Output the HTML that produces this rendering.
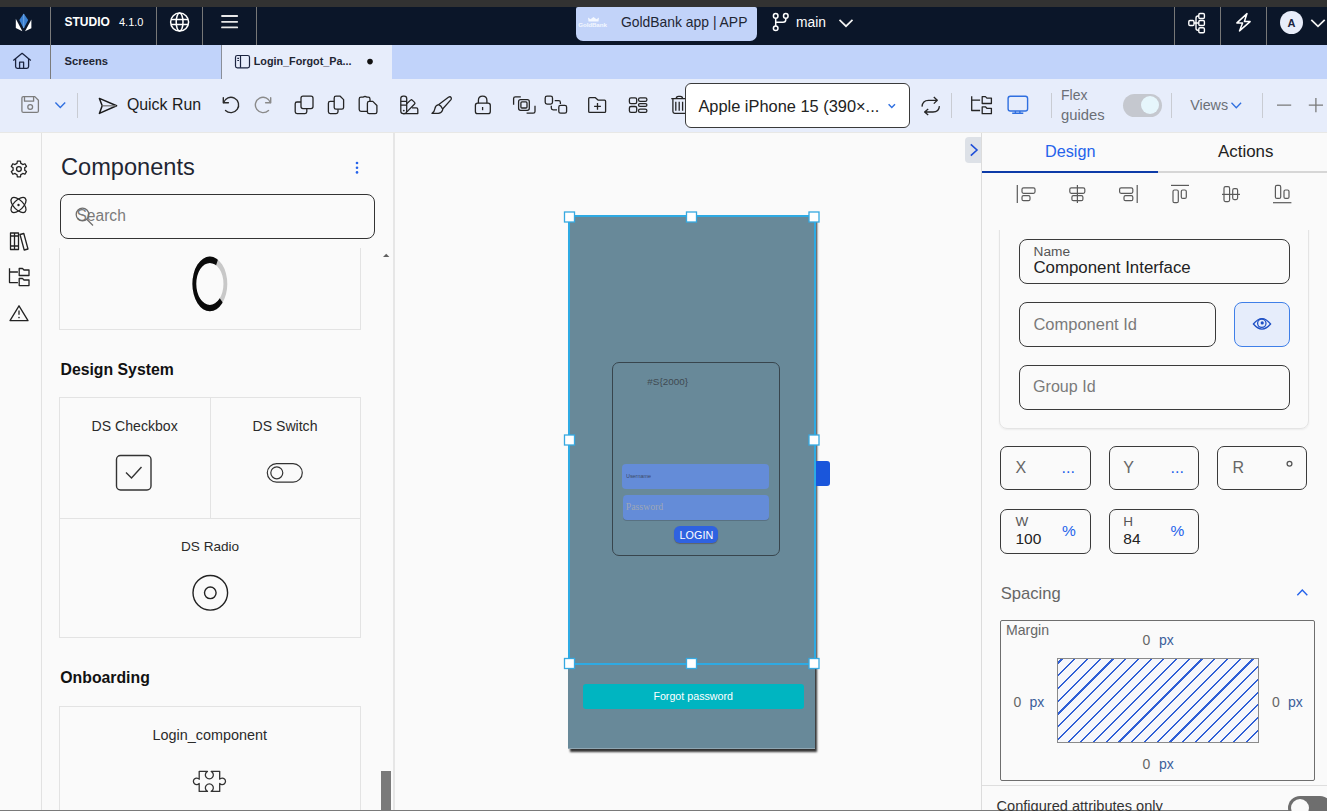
<!DOCTYPE html>
<html><head><meta charset="utf-8">
<style>
*{box-sizing:border-box;margin:0;padding:0}
html,body{width:1327px;height:811px;overflow:hidden;background:#fafafa;font-family:"Liberation Sans",sans-serif}
.a{position:absolute}
.t{position:absolute;white-space:nowrap;line-height:1;font-family:"Liberation Sans",sans-serif}
svg{position:absolute;overflow:visible}
.vl{position:absolute;width:1px}
.box{position:absolute;border:1px solid #3a3a3a;border-radius:8px;background:#fafafa}
</style></head><body>
<!-- top strip -->
<div class="a" style="left:0;top:0;width:1327px;height:7px;background:#323232"></div>
<!-- navy bar -->
<div class="a" style="left:0;top:7px;width:1327px;height:38px;background:#0b1629"></div>
<!-- tab row -->
<div class="a" style="left:0;top:45px;width:1327px;height:34px;background:#c1d3fa"></div>
<!-- active tab -->
<div class="a" style="left:221px;top:45px;width:171px;height:34px;background:#e7edfb;border-left:1px solid #8a8f99"></div>
<!-- toolbar -->
<div class="a" style="left:0;top:79px;width:1327px;height:53px;background:#e7edfb"></div>
<div class="a" style="left:0;top:132px;width:1327px;height:1px;background:#e8e8e6"></div>
<!-- left sidebar border -->
<div class="a" style="left:41px;top:133px;width:1px;height:678px;background:#e2e2e2"></div>
<!-- components panel border -->
<div class="a" style="left:393px;top:133px;width:2px;height:678px;background:#e6e6e6"></div>
<!-- canvas -->
<div class="a" style="left:395px;top:133px;width:586px;height:678px;background:#fafafa"></div>
<!-- right panel border -->
<div class="a" style="left:981px;top:133px;width:1px;height:678px;background:#dcdcdc"></div>
<!-- bottom line -->
<div class="a" style="left:0;top:810px;width:1327px;height:1px;background:#7a7a7a"></div>

<!-- navy dividers -->
<div class="vl" style="left:50px;top:7px;height:72px;background:#7b7b7b"></div>
<div class="vl" style="left:156px;top:7px;height:38px;background:#777777"></div>
<div class="vl" style="left:202px;top:7px;height:38px;background:#777777"></div>
<div class="vl" style="left:256px;top:7px;height:38px;background:#777777"></div>
<div class="vl" style="left:1174px;top:7px;height:38px;background:#777777"></div>
<div class="vl" style="left:1220px;top:7px;height:38px;background:#777777"></div>
<div class="vl" style="left:1266px;top:7px;height:38px;background:#777777"></div>

<!-- texts top bar -->
<div class="t" style="left:64.5px;top:16.4px;font-size:12px;font-weight:700;color:#fff">STUDIO</div>
<div class="t" style="left:119px;top:16.6px;font-size:11px;color:#fff">4.1.0</div>
<!-- pill -->
<div class="a" style="left:576px;top:7px;width:181px;height:34px;background:#c2d3f9;border-radius:2px 2px 7px 7px"></div>
<div class="t" style="left:621px;top:16.2px;font-size:13.9px;color:#1f2633">GoldBank app | APP</div>
<div class="t" style="left:796px;top:16px;font-size:13.8px;color:#fff">main</div>

<div class="t" style="left:64.5px;top:55.5px;font-size:11.2px;font-weight:700;color:#1f2633">Screens</div>
<div class="t" style="left:253.7px;top:55.5px;font-size:10.8px;font-weight:700;color:#1f2633">Login_Forgot_Pa...</div>

<!-- toolbar texts -->
<div class="t" style="left:126.9px;top:96.5px;font-size:15.9px;color:#1c1c1c">Quick Run</div>
<div class="a" style="left:685px;top:83px;width:225px;height:44.5px;background:#fff;border:1px solid #3a3a3a;border-radius:6px"></div>
<div class="t" style="left:698.4px;top:97.9px;font-size:16.4px;color:#222">Apple iPhone 15 (390×...</div>
<div class="t" style="left:1061px;top:88.4px;font-size:14px;color:#6b6f76">Flex</div>
<div class="t" style="left:1061px;top:107.6px;font-size:14.8px;color:#6b6f76">guides</div>
<div class="t" style="left:1190.2px;top:98.1px;font-size:14.3px;color:#6b6f76">Views</div>

<!-- toolbar dividers -->
<div class="vl" style="left:77px;top:93px;height:25px;background:#c9ccd3"></div>
<div class="vl" style="left:951px;top:93px;height:25px;background:#c9ccd3"></div>
<div class="vl" style="left:1051px;top:93px;height:25px;background:#c9ccd3"></div>
<div class="vl" style="left:1171px;top:93px;height:25px;background:#c9ccd3"></div>
<div class="vl" style="left:1262px;top:93px;height:25px;background:#c9ccd3"></div>


<!-- TOPBAR ICONS -->
<svg style="left:0;top:0" width="1" height="1">
 <polygon points="23.7,13.6 28.2,20 23.7,28.6 19.3,20" fill="#3a7fd0"/>
 <path d="M23.7 14 V28" stroke="#7eb0e6" stroke-width="0.8"/>
 <polygon points="15.8,18.8 22.4,31.3 15.8,28" fill="#fff"/>
 <polygon points="31.4,19.6 25,31.3 31.4,28.2" fill="#fff"/>
 <g fill="none" stroke="#fff" stroke-width="1.5">
  <circle cx="179.6" cy="22.1" r="9"/>
  <ellipse cx="179.6" cy="22.1" rx="3.4" ry="9"/>
  <path d="M171 19.6 H188.2 M171 24.6 H188.2"/>
 </g>
 <g stroke="#e8e8e8" stroke-width="1.8" stroke-linecap="round"><path d="M222 16 H237.2 M222 21.8 H237.2 M222 27.4 H237.2"/></g>
 <!-- branch -->
 <g fill="none" stroke="#fff" stroke-width="1.5">
  <circle cx="775.7" cy="15.9" r="2.3"/><circle cx="785.8" cy="15.9" r="2.3"/><circle cx="775.7" cy="28.3" r="2.3"/>
  <path d="M775.7 18.2 V26 M785.8 18.2 V19.5 Q785.8 22.3 783 22.3 H775.7"/>
 </g>
 <path d="M839.5 19.8 L846 26.2 L852.5 19.8" fill="none" stroke="#f2f2f2" stroke-width="1.7"/>
 <!-- tree -->
 <g fill="none" stroke="#fff" stroke-width="1.4">
  <rect x="1188.8" y="20.5" width="5.2" height="5" rx="1.2"/>
  <rect x="1198.8" y="13.5" width="5.6" height="5" rx="1.2"/>
  <rect x="1198.8" y="20.5" width="5.6" height="5" rx="1.2"/>
  <rect x="1198.8" y="27.8" width="5.6" height="5" rx="1.2"/>
  <path d="M1198.8 16 H1198 Q1196 16 1196 18 V28.3 Q1196 30.3 1198 30.3 H1198.8 M1194 23 H1198.8"/>
 </g>
 <path d="M1247 13.6 L1236.9 22.9 H1242.6 L1239.5 30.9 L1250.1 21.6 H1244.4 Z" fill="none" stroke="#fff" stroke-width="1.5" stroke-linejoin="round"/>
 <circle cx="1291.5" cy="22.5" r="11.5" fill="#e8edfa"/>
 <path d="M1311.3 19.8 L1318 26.4 L1324.7 19.8" fill="none" stroke="#f2f2f2" stroke-width="1.7"/>
 <!-- home -->
 <g fill="none" stroke="#1b2440" stroke-width="1.3" stroke-linejoin="round">
  <path d="M13.3 60.6 L22.1 53.3 L30.8 60.6"/>
  <path d="M15.6 58.8 V66.6 Q15.6 68.3 17.3 68.3 H26.9 Q28.6 68.3 28.6 66.6 V58.8"/>
  <path d="M19.6 68.3 V62.2 H23.6 V68.3"/>
 </g>
 <!-- page icon in tab -->
 <g fill="none" stroke="#1b2440" stroke-width="1.2">
  <rect x="235.5" y="55.5" width="14" height="12.3" rx="1.8"/>
  <path d="M240.5 55.5 V67.8 M237.3 58.3 H239 M237.3 60.5 H239"/>
 </g>
 <circle cx="370" cy="61.6" r="2.8" fill="#111"/>
</svg>
<div class="t" style="left:1287.5px;top:17.6px;font-size:11px;font-weight:700;color:#1b2440">A</div>
<div class="t" style="left:578.3px;top:22.2px;font-size:6.2px;font-weight:700;color:#f4f8ff;letter-spacing:-0.1px">GoldBank</div>
<svg style="left:0;top:0" width="1" height="1"><path d="M588.5 21.6 L588 17.6 L590.5 19.3 L593.5 17 L596.5 19.3 L599 17.6 L598.5 21.6 Z" fill="#f4f8ff"/></svg>

<!-- TOOLBAR ICONS -->
<svg style="left:0;top:0" width="1" height="1">
 <g fill="none" stroke="#7d7d7d" stroke-width="1.3" stroke-linejoin="round">
  <path d="M23.4 96.6 H34.8 L38.4 100.2 V110.9 Q38.4 112.4 36.9 112.4 H23.4 Q21.9 112.4 21.9 110.9 V98.1 Q21.9 96.6 23.4 96.6 Z"/>
  <path d="M24.5 96.6 V101.2 H33.6 V96.6"/>
  <circle cx="30.2" cy="107" r="2.4"/>
 </g>
 <path d="M55.4 102.6 L60.3 107.6 L65.2 102.6" fill="none" stroke="#2f6fe0" stroke-width="1.4"/>
 <g fill="none" stroke="#1a1a1a" stroke-width="1.5" stroke-linejoin="round">
  <path d="M99.4 98.4 L116.6 105.8 L99.4 113.4 L102.2 105.8 Z"/>
 </g>
 <path d="M102.2 105.8 H116" stroke="#777" stroke-width="1.3"/>
 <!-- undo / redo -->
 <g fill="none" stroke-width="1.4" stroke-linecap="round" stroke-linejoin="round">
  <path d="M223.6 102.6 A7.7 7.7 0 1 1 225.5 110.4" stroke="#2a2a2a"/>
  <path d="M223.3 97.8 V102.8 H228.4" stroke="#2a2a2a"/>
  <path d="M270.4 102.6 A7.7 7.7 0 1 0 268.5 110.4" stroke="#8a8a8a"/>
  <path d="M270.7 97.8 V102.8 H265.6" stroke="#8a8a8a"/>
 </g>
 <g fill="none" stroke="#252525" stroke-width="1.3" stroke-linejoin="round">
  <!-- copy1 -->
  <path d="M301 102 H297 Q295.2 102 295.2 103.8 V111.8 Q295.2 113.6 297 113.6 H305 Q306.8 113.6 306.8 111.8 V108.6"/>
  <rect x="301" y="96.2" width="12" height="12.4" rx="2"/>
  <!-- copy2 -->
  <path d="M334.2 101.4 H330.2 Q328.4 101.4 328.4 103.2 V111.8 Q328.4 113.6 330.2 113.6 H336.2 Q338 113.6 338 111.8 V109.2"/>
  <path d="M336 96.2 H340.2 L343.6 99.6 V107.4 Q343.6 109.2 341.8 109.2 H336 Q334.2 109.2 334.2 107.4 V98 Q334.2 96.2 336 96.2 Z"/>
  <!-- paste -->
  <path d="M367.4 111.4 H361 Q359.2 111.4 359.2 109.6 V99 Q359.2 97.2 361 97.2 H363 L365 96.4 L367 97.2 H368.2 Q370 97.2 370 99 V101.3"/>
  <path d="M369.2 101.4 H372.8 L376.9 105.5 V111.9 Q376.9 113.7 375.1 113.7 H369.2 Q367.4 113.7 367.4 111.9 V103.2 Q367.4 101.4 369.2 101.4 Z"/>
  <!-- palette -->
  <rect x="400.8" y="96.2" width="5.9" height="17.4" rx="2.4"/>
  <path d="M400.8 101.4 H406.7 M400.8 105.2 H406.7"/>
  <path d="M406.7 103.8 L410.6 100.1 Q411.4 99.3 412.2 100.1 L414.6 102.4 Q415.4 103.2 414.6 104 L406.9 111.9"/>
  <path d="M412 107.9 H416.3 Q417.8 107.9 417.8 109.4 V113.6 H403"/>
  <!-- brush -->
  <path d="M438.8 104.6 L448.4 97.3 Q450.4 96 451.2 97.7 Q451.6 98.6 451 99.6 L442.6 109"/>
  <path d="M438.8 104.6 Q435.4 105.2 434.9 108.6 Q434.5 111.8 432 113.3 H438.2 Q441.4 113.3 442.4 110.6 Q442.8 109.6 442.6 109 Q441.2 105.8 438.8 104.6 Z"/>
  <!-- lock -->
  <path d="M478.4 103.2 V100.6 Q478.4 96.2 482.6 96.2 Q486.9 96.2 486.9 100.6 V103.2"/>
  <rect x="475.4" y="103.2" width="14.9" height="10.5" rx="2.2"/>
  <path d="M482.6 107 V110.2"/>
  <!-- group -->
  <path d="M513.6 104.7 V98.6 Q513.6 96.8 515.4 96.8 H520.8"/>
  <path d="M526.6 113.2 H533.2 Q535 113.2 535 111.4 V105.8"/>
  <rect x="518.6" y="99.6" width="10.7" height="10.7" rx="2"/>
  <rect x="520.9" y="101.9" width="6.1" height="6.1" rx="1"/>
  <!-- ungroup -->
  <rect x="545.2" y="96.2" width="7.3" height="7.9" rx="1.8"/>
  <rect x="558.8" y="105.3" width="7.8" height="7.9" rx="1.8"/>
  <path d="M554.7 100.7 H558.6 Q560.4 100.7 560.4 102.5 V104.1"/>
  <path d="M551.3 105.8 V108 Q551.3 109.8 553.1 109.8 H557"/>
  <!-- folder plus -->
  <path d="M588.7 98.7 Q588.7 97.7 589.7 97.7 H595.4 L598.3 100.2 H604.6 Q605.6 100.2 605.6 101.2 V111.4 Q605.6 112.4 604.6 112.4 H589.7 Q588.7 112.4 588.7 111.4 Z"/>
  <path d="M597.5 103 V109.8 M594.1 106.4 H600.9"/>
  <!-- grid -->
  <rect x="629.4" y="97.8" width="7.3" height="5.8" rx="1.6"/>
  <rect x="629.4" y="106.5" width="7.3" height="5.9" rx="1.6"/>
  <rect x="638.5" y="97.8" width="8.4" height="3.5" rx="1.6"/>
  <rect x="638.5" y="103.6" width="8.4" height="2.8" rx="1.4"/>
  <rect x="638.5" y="109.1" width="8.4" height="3.3" rx="1.6"/>
  <!-- trash -->
  <path d="M671.3 98.7 H685 M676.2 98.7 Q676.2 96.3 678.5 96.3 H680.3 Q682.6 96.3 682.6 98.7"/>
  <path d="M672.9 98.7 V111.6 Q672.9 113.4 674.7 113.4 H685"/>
  <path d="M675.8 101.8 V110.8 M679.2 101.8 V110.8 M682.6 101.8 V110.8"/>
  <!-- swap -->
  <path d="M922 106.6 Q922.5 100.3 928.5 100.3 H937.3 M933.8 97.1 L937.3 100.3 L933.8 103.6"/>
  <path d="M939.4 106.1 Q939 112 933 112 H924.6 M928.2 108.9 L924.6 112 L928.2 115"/>
  <!-- folder tree -->
  <path d="M971.7 96.3 V110.5 H980.1 M971.7 100.2 H980.1"/>
  <path d="M982.2 103.5 V96.6 h3.2 l1.5 1.5 h4.5 v5.4 z M982.2 113.7 V106.8 h3.2 l1.5 1.5 h4.5 v5.4 z"/>
 </g>
 <g fill="none" stroke="#2f6fe0" stroke-width="1.4">
  <rect x="1008.1" y="96.3" width="19.5" height="14.7" rx="2.2"/>
  <path d="M1015.4 111 V113.3 M1019.9 111 V113.3 M1012.2 113.3 H1023.3"/>
 </g>
 <path d="M888.6 104.2 L891.8 107.6 L895 104.2" fill="none" stroke="#2f6fe0" stroke-width="1.4"/>
 <path d="M1231.5 102.8 L1236.3 107.7 L1241.1 102.8" fill="none" stroke="#2f6fe0" stroke-width="1.3"/>
 <g stroke="#7a7a7a" stroke-width="1.3"><path d="M1277 105.1 H1291.2 M1308.8 105.1 H1323 M1315.9 98 V112.2"/></g>
</svg>
<div class="a" style="left:1123px;top:94px;width:39px;height:23px;background:#c5c8cf;border-radius:11.5px"></div>
<div class="a" style="left:1140.7px;top:95.7px;width:18.6px;height:18.6px;background:#e6f6fc;border-radius:50%"></div>

<!-- components panel -->
<div class="t" style="left:61px;top:156.4px;font-size:23.6px;color:#1f2633">Components</div>
<div class="box" style="left:60px;top:194px;width:315px;height:45px;border-color:#333"></div>
<div class="t" style="left:76.4px;top:208.3px;font-size:15.6px;color:#7a7a7a">Search</div>

<!-- search magnifier -->
<svg style="left:0;top:0" width="1" height="1"><g fill="none" stroke="#6d6d6d" stroke-width="1.3"><circle cx="82.5" cy="214.5" r="6.3"/><path d="M87 219.5 L93 225.5"/></g></svg>
<!-- kebab -->
<svg style="left:0;top:0" width="1" height="1"><g fill="#2563eb"><circle cx="357" cy="163" r="1.3"/><circle cx="357" cy="167.7" r="1.3"/><circle cx="357" cy="172.4" r="1.3"/></g></svg>

<!-- list clip area -->
<div class="a" style="left:42px;top:248px;width:351px;height:562px;overflow:hidden">
  <!-- card 1 -->
  <div class="a" style="left:17px;top:-20px;width:302px;height:102px;border:1px solid #e3e3e3"></div>
  <div class="t" style="left:18.5px;top:113.6px;font-size:15.8px;font-weight:700;color:#111">Design System</div>
  <!-- DS grid -->
  <div class="a" style="left:17px;top:149px;width:302px;height:241px;border:1px solid #e3e3e3"></div>
  <div class="a" style="left:168px;top:150px;width:1px;height:120px;background:#e3e3e3"></div>
  <div class="a" style="left:18px;top:269.5px;width:300px;height:1px;background:#e3e3e3"></div>
  <div class="t" style="left:49.6px;top:171px;font-size:14.1px;color:#2a2a2a">DS Checkbox</div>
  <div class="t" style="left:210.5px;top:171px;font-size:14.1px;color:#2a2a2a">DS Switch</div>
  <div class="t" style="left:139px;top:291.9px;font-size:13.6px;color:#2a2a2a">DS Radio</div>
  <div class="t" style="left:18.3px;top:422px;font-size:15.8px;font-weight:700;color:#111">Onboarding</div>
  <div class="a" style="left:17px;top:458px;width:302px;height:200px;border:1px solid #e3e3e3"></div>
  <div class="t" style="left:110.6px;top:479.6px;font-size:14.4px;color:#2a2a2a">Login_component</div>
</div>
<!-- spinner -->
<svg style="left:0;top:0" width="1" height="1"><defs><clipPath id="spc"><polygon points="209.85,283.9 232.8,215.2 150,215 150,345 244.8,334.3"/></clipPath></defs>
<path d="M192.4 283.9 a17.45 27.3 0 1 0 34.9 0 a17.45 27.3 0 1 0 -34.9 0 Z M196.25 283.9 a13.6 21 0 1 0 27.2 0 a13.6 21 0 1 0 -27.2 0 Z" fill="#c8c8c8" fill-rule="evenodd"/>
<path d="M192.4 283.9 a17.45 27.3 0 1 0 34.9 0 a17.45 27.3 0 1 0 -34.9 0 Z M196.25 283.9 a13.6 21 0 1 0 27.2 0 a13.6 21 0 1 0 -27.2 0 Z" fill="#0a0a0a" fill-rule="evenodd" clip-path="url(#spc)"/></svg>
<!-- checkbox -->
<svg style="left:0;top:0" width="1" height="1"><rect x="116.5" y="455.5" width="34.5" height="34.5" rx="4" fill="none" stroke="#333" stroke-width="1.4"/><path d="M126 472.5 L131.5 478 L141.5 467" fill="none" stroke="#333" stroke-width="1.4"/></svg>
<!-- switch -->
<svg style="left:0;top:0" width="1" height="1"><rect x="267.3" y="463.6" width="35" height="18.5" rx="9.25" fill="none" stroke="#333" stroke-width="1.2"/><circle cx="276.8" cy="472.8" r="6" fill="none" stroke="#333" stroke-width="1.2"/></svg>
<!-- radio -->
<svg style="left:0;top:0" width="1" height="1"><circle cx="210.3" cy="592.8" r="17.3" fill="none" stroke="#222" stroke-width="1.4"/><circle cx="210.3" cy="592.8" r="5.8" fill="none" stroke="#222" stroke-width="1.4"/></svg>
<!-- puzzle -->
<svg style="left:0;top:0" width="1" height="1"><path d="M199.2 771.3 H207.5 A4 4 0 1 0 211.2 771.3 H219.7 V779.2 A3.3 3.3 0 1 1 219.7 783.5 V791.4 H211.2 A4 4 0 1 0 207.5 791.4 H199.2 V783.5 A3.3 3.3 0 1 1 199.2 779.2 Z" fill="none" stroke="#333" stroke-width="1.3" stroke-linejoin="round"/></svg>
<!-- scrollbar -->
<svg style="left:0;top:0" width="1" height="1"><path d="M383 257 L386.2 253.8 L389.4 257 Z" fill="#606060"/></svg>
<div class="a" style="left:381px;top:771px;width:10px;height:39px;background:#7a7a7a"></div>

<!-- left sidebar icons -->
<svg style="left:0;top:0" width="1" height="1"><g fill="none" stroke="#222" stroke-width="1.3" stroke-linejoin="round">
 <path d="M16.04 163.84 L16.98 163.42 L17.37 161.15 L20.43 161.15 L20.82 163.42 L21.94 163.94 L22.77 164.55 L24.94 163.75 L26.46 166.40 L24.69 167.87 L24.80 169.10 L24.69 170.13 L26.46 171.60 L24.94 174.25 L22.77 173.45 L21.76 174.16 L20.82 174.58 L20.43 176.85 L17.37 176.85 L16.98 174.58 L15.86 174.06 L15.03 173.45 L12.86 174.25 L11.34 171.60 L13.11 170.13 L13.00 168.90 L13.11 167.87 L11.34 166.40 L12.86 163.75 L15.03 164.55 Z"/>
 <circle cx="18.9" cy="169.1" r="2.4"/>
 <ellipse cx="18.5" cy="205" rx="9.5" ry="4.8" transform="rotate(45 18.5 205)"/>
 <ellipse cx="18.5" cy="205" rx="9.5" ry="4.8" transform="rotate(-45 18.5 205)"/>
 <path d="M10.5 233 h4 v16.5 h-4 z M14.5 233 h4 v16.5 h-4 z M10.5 246 h8 M10.5 236 h8 M20 234.5 l3.8 -1 l4.2 15.5 l-3.8 1 z"/>
 <path d="M9.5 268.2 V282.6 H17.9 M9.5 272 H17.9"/>
 <path d="M19.2 275.5 V268.5 h3.3 l1.5 1.5 h5 v5.5 z M19.2 285.6 V278.5 h3.3 l1.5 1.5 h5 v5.6 z"/>
 <path d="M19 305.8 L28 320.6 H10 Z"/>
 <path d="M19 310.5 V314.8"/>
</g><circle cx="19" cy="317.6" r="0.8" fill="#222"/><circle cx="403.8" cy="110.6" r="0.9" fill="#252525"/><circle cx="18.5" cy="205" r="1.2" fill="#222"/></svg>

<!-- canvas -->
<div class="a" style="left:568px;top:216px;width:246.5px;height:532.5px;background:#688999;border-bottom:1px solid #8fa6b2;box-shadow:1.5px 2.5px 2px rgba(0,0,0,0.8)"></div>
<!-- login card -->
<div class="a" style="left:612px;top:362px;width:168px;height:194px;border:1px solid #38454d;border-radius:7px"></div>
<div class="t" style="left:647.3px;top:377.3px;font-size:9.9px;color:#3f4a52">#S{2000}</div>
<div class="a" style="left:622px;top:463.5px;width:147px;height:25.5px;background:#648cd8;border-radius:4px"></div>
<div class="t" style="left:625.7px;top:473px;font-size:6px;color:#3c4a66;transform:scaleX(0.9);transform-origin:left">Username</div>
<div class="a" style="left:622.5px;top:495px;width:146.5px;height:24.5px;background:#648cd8;border-radius:4px;box-shadow:0 1px 0 rgba(60,70,90,0.35)"></div>
<div class="t" style="left:625.7px;top:502px;font-size:9.8px;color:#9ea7b4;font-family:'Liberation Serif',serif">Password</div>
<div class="a" style="left:674px;top:526.4px;width:44px;height:16.6px;background:#2f62e0;border-radius:6px;box-shadow:0 1px 1px rgba(80,60,60,0.5)"></div>
<div class="t" style="left:679.6px;top:529.6px;font-size:10.8px;color:#fff">LOGIN</div>
<!-- forgot -->
<div class="a" style="left:583px;top:683.7px;width:220.5px;height:25px;background:#00b5c1;border-radius:3px"></div>
<div class="t" style="left:653.4px;top:691px;font-size:10.7px;color:#fff">Forgot password</div>
<!-- blue tab -->
<div class="a" style="left:815px;top:461px;width:15px;height:25px;background:#1a56db;border-radius:0 3px 3px 0"></div>
<!-- selection -->
<div class="a" style="left:567.5px;top:215px;width:248.5px;height:450px;border:2px solid #2eaae3"></div>
<svg style="left:0;top:0" width="1" height="1"><g fill="#fff" stroke="#36a9e1" stroke-width="1.3">
<rect x="564.5" y="212" width="10" height="10"/><rect x="686.5" y="212" width="10" height="10"/><rect x="809" y="212" width="10" height="10"/>
<rect x="564.5" y="435" width="10" height="10"/><rect x="809" y="435" width="10" height="10"/>
<rect x="564.5" y="658.5" width="10" height="10"/><rect x="686.5" y="658.5" width="10" height="10"/><rect x="809" y="658.5" width="10" height="10"/>
</g></svg>
<!-- collapse btn -->
<div class="a" style="left:964.5px;top:137px;width:16.5px;height:26px;background:#dde1e7;border-radius:4px 0 0 4px"></div>
<svg style="left:0;top:0" width="1" height="1"><path d="M970.8 144.3 L977 150 L970.8 155.7" fill="none" stroke="#1d4ed8" stroke-width="1.6"/></svg>

<!-- right panel -->
<div class="t" style="left:1045px;top:143.4px;font-size:16.2px;color:#2563eb">Design</div>
<div class="t" style="left:1218px;top:144.1px;font-size:16.9px;color:#222">Actions</div>
<div class="a" style="left:982px;top:171px;width:176px;height:2px;background:#0d3ba8"></div>
<div class="a" style="left:1158px;top:171px;width:169px;height:2px;background:#d6d6d6"></div>
<!-- align icons -->
<svg style="left:0;top:0" width="1" height="1"><g fill="none" stroke="#5a5a5a" stroke-width="1.2">
<path d="M1017.3 185 V203"/><rect x="1022" y="187.8" width="13" height="5.5" rx="1.5"/><rect x="1022" y="195.7" width="8" height="5" rx="1.5"/>
<path d="M1077.4 185 V203"/><rect x="1069.8" y="187.8" width="15" height="5.5" rx="1.5"/><rect x="1071.9" y="195.7" width="11" height="5" rx="1.5"/>
<path d="M1137.2 185 V203"/><rect x="1119.6" y="187.8" width="13.2" height="5.5" rx="1.5"/><rect x="1124" y="195.7" width="8.8" height="5" rx="1.5"/>
<path d="M1171 185.4 H1189"/><rect x="1173" y="190" width="5.3" height="12.7" rx="1.5"/><rect x="1181.3" y="190" width="5" height="8.4" rx="1.5"/>
<path d="M1222 194.4 H1240"/><rect x="1224" y="186.7" width="5.6" height="14.9" rx="1.5"/><rect x="1232.7" y="188.7" width="4.9" height="10.9" rx="1.5"/>
<path d="M1273 202.7 H1291.4"/><rect x="1275.4" y="185.4" width="5.3" height="13" rx="1.5"/><rect x="1284" y="190" width="5" height="8.4" rx="1.5"/>
</g></svg>
<!-- props card (clipped top) -->
<div class="a" style="left:982px;top:230px;width:345px;height:556px;overflow:hidden">
  <div class="a" style="left:17px;top:-20px;width:310px;height:219px;border:1px solid #e4e4e4;border-radius:8px;box-shadow:0 1px 2px rgba(0,0,0,0.06)"></div>
</div>
<div class="box" style="left:1018.5px;top:239px;width:271.5px;height:45px"></div>
<div class="t" style="left:1033.5px;top:245px;font-size:13.7px;color:#555">Name</div>
<div class="t" style="left:1033.4px;top:259.8px;font-size:16.85px;color:#222">Component Interface</div>
<div class="box" style="left:1018.5px;top:302px;width:197.5px;height:45px"></div>
<div class="t" style="left:1033.4px;top:315.5px;font-size:16.5px;color:#7a7a7a">Component Id</div>
<div class="box" style="left:1234px;top:302px;width:56px;height:45px;background:#e6edfb;border-color:#3f7fe8"></div>
<svg style="left:0;top:0" width="1" height="1"><g fill="none" stroke="#1d4fc4" stroke-width="1.25"><path d="M1253.4 324 Q1262 313.3 1270.6 324 Q1262 334 1253.4 324 Z"/><circle cx="1261.8" cy="323.3" r="4.2"/></g><circle cx="1262.2" cy="322.9" r="1.6" fill="#1d4fc4"/></svg>
<div class="box" style="left:1018.5px;top:365px;width:271.5px;height:44.5px"></div>
<div class="t" style="left:1033px;top:378.4px;font-size:16.1px;color:#7a7a7a">Group Id</div>
<!-- XYR -->
<div class="box" style="left:1000px;top:446.3px;width:91px;height:44px;border-radius:7px"></div>
<div class="box" style="left:1109.3px;top:446.3px;width:89.5px;height:44px;border-radius:7px"></div>
<div class="box" style="left:1217.3px;top:446.3px;width:90px;height:44px;border-radius:7px"></div>
<div class="t" style="left:1015.4px;top:459.5px;font-size:16px;color:#666">X</div>
<div class="t" style="left:1123.3px;top:459.5px;font-size:16px;color:#666">Y</div>
<div class="t" style="left:1232.5px;top:459.5px;font-size:16px;color:#666">R</div>
<div class="t" style="left:1061.5px;top:460px;font-size:16px;color:#2563eb">...</div>
<div class="t" style="left:1170.5px;top:460px;font-size:16px;color:#2563eb">...</div>
<svg style="left:0;top:0" width="1" height="1"><circle cx="1289.5" cy="463.7" r="2.4" fill="none" stroke="#555" stroke-width="1.3"/></svg>
<div class="box" style="left:1000px;top:509px;width:91px;height:44.5px;border-radius:7px"></div>
<div class="box" style="left:1109.3px;top:509px;width:89.5px;height:44.5px;border-radius:7px"></div>
<div class="t" style="left:1015.4px;top:515.3px;font-size:13.5px;color:#555">W</div>
<div class="t" style="left:1123.3px;top:515.3px;font-size:13.5px;color:#555">H</div>
<div class="t" style="left:1015.4px;top:530.6px;font-size:15.5px;color:#222">100</div>
<div class="t" style="left:1123.3px;top:530.6px;font-size:15.5px;color:#222">84</div>
<div class="t" style="left:1062px;top:523px;font-size:15.5px;color:#2563eb">%</div>
<div class="t" style="left:1170.5px;top:523px;font-size:15.5px;color:#2563eb">%</div>
<div class="t" style="left:1000.7px;top:586px;font-size:16.6px;color:#666">Spacing</div>
<svg style="left:0;top:0" width="1" height="1"><path d="M1297.3 595.3 L1302.3 590 L1307.3 595.3" fill="none" stroke="#2563eb" stroke-width="1.4"/></svg>
<!-- margin box -->
<div class="a" style="left:1000px;top:620px;width:314.5px;height:161px;border:1px solid #6e6e6e;border-radius:2px"></div>
<div class="t" style="left:1006px;top:623.2px;font-size:14.1px;color:#666">Margin</div>
<div class="a" style="left:1057px;top:658px;width:201.5px;height:84.6px;border:1px solid #8a8a8a;background:repeating-linear-gradient(-45deg,#f6f7fb 0px,#f6f7fb 7.5px,#2f5fd6 7.5px,#2f5fd6 9px)"></div>
<div class="t" style="left:1142.4px;top:633px;font-size:14px;color:#666">0</div><div class="t" style="left:1158.9px;top:633px;font-size:14px;color:#3b5e9a">px</div>
<div class="t" style="left:1013.4px;top:695.2px;font-size:14px;color:#666">0</div><div class="t" style="left:1029.4px;top:695.2px;font-size:14px;color:#3b5e9a">px</div>
<div class="t" style="left:1272px;top:695.2px;font-size:14px;color:#666">0</div><div class="t" style="left:1288px;top:695.2px;font-size:14px;color:#3b5e9a">px</div>
<div class="t" style="left:1142.4px;top:757.4px;font-size:14px;color:#666">0</div><div class="t" style="left:1158.9px;top:757.4px;font-size:14px;color:#3b5e9a">px</div>
<div class="a" style="left:982px;top:785px;width:345px;height:1px;background:#dedede"></div>
<div class="t" style="left:996.5px;top:798.9px;font-size:14.6px;color:#333">Configured attributes only</div>
<div class="a" style="left:1288px;top:796px;width:44px;height:24px;background:#6e6e6e;border-radius:12px"></div>
<div class="a" style="left:1291px;top:799px;width:18px;height:18px;background:#fafafa;border-radius:9px"></div>

</body></html>
